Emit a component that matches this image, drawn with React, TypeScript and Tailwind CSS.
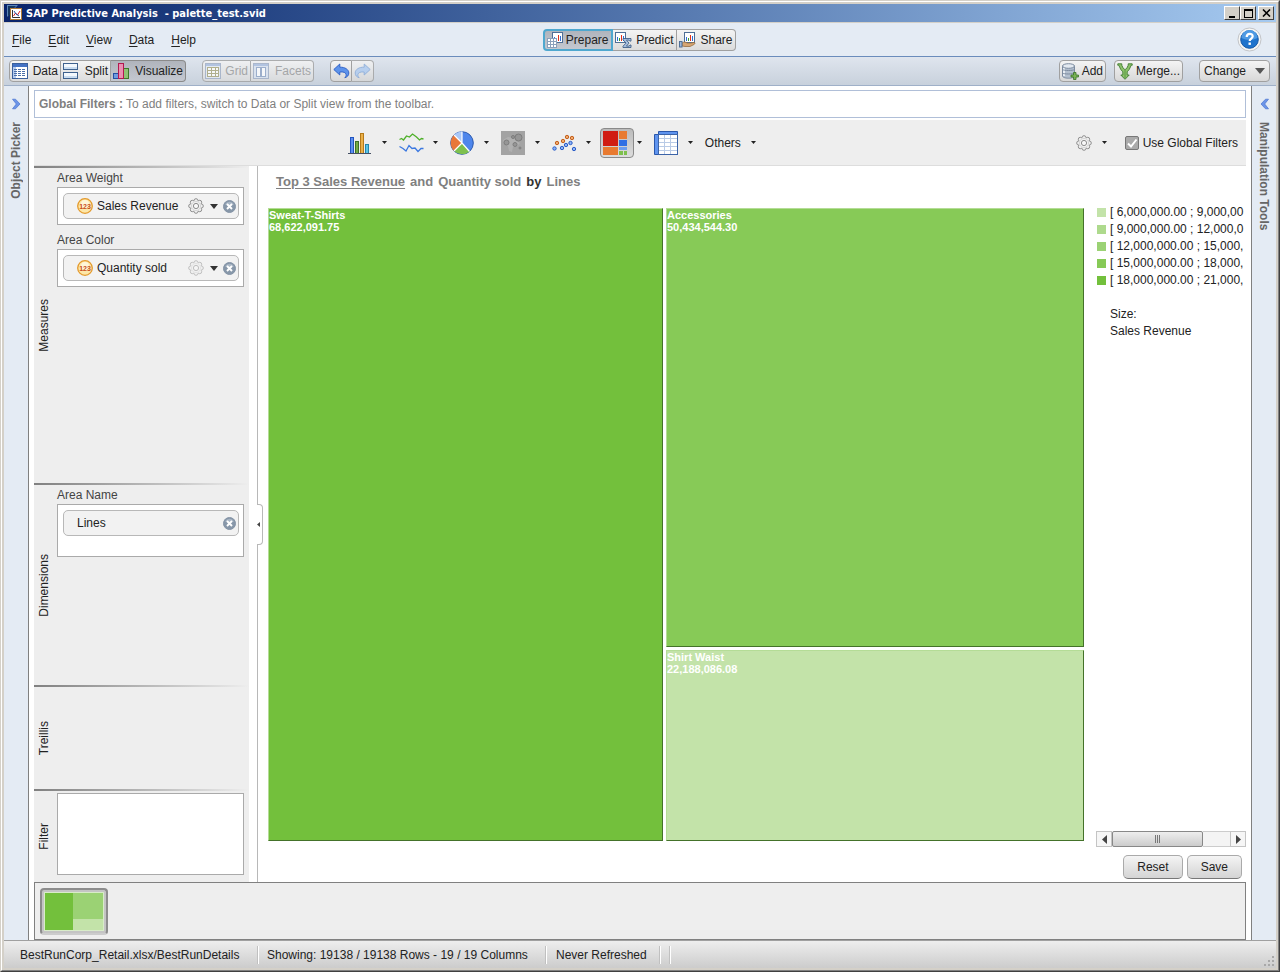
import React from 'react';

// ================================
// Data
// ================================

const MENUS = ['File', 'Edit', 'View', 'Data', 'Help'];

const LEGEND = [
  { color: 'bg-[#c3e3a9]', label: '[ 6,000,000.00 ; 9,000,00' },
  { color: 'bg-[#aeda8d]', label: '[ 9,000,000.00 ; 12,000,0' },
  { color: 'bg-[#9bd274]', label: '[ 12,000,000.00 ; 15,000,' },
  { color: 'bg-[#87ca57]', label: '[ 15,000,000.00 ; 18,000,' },
  { color: 'bg-[#73c03c]', label: '[ 18,000,000.00 ; 21,000,' },
];

// ================================
// Icons
// ================================

const AppIcon = () => (
  <svg width="16" height="16" viewBox="0 0 16 16">
    <path d="M0 0h11L8 3H4v5l-4 4z" fill="#5b86b8" />
    <path d="M1 1h8L3 8v2l-2 1z" fill="#16365f" />
    <rect x="3.5" y="3.5" width="11" height="11" fill="#fff" stroke="#b07a35" />
    <path d="M5.5 5v7.5H13" fill="none" stroke="#333" />
    <path d="M6.5 11l2-3 2 2 2.5-4" fill="none" stroke="#d22" />
    <path d="M7 6l2 3 3 2" fill="none" stroke="#25a" />
  </svg>
);

const MiniChart = ({ x, y }: { x: number; y: number }) => (
  <g transform={`translate(${x} ${y})`}>
    <rect x="0.5" y="0.5" width="10" height="10" fill="#fff" stroke="#4f6f97" />
    <path d="M2.5 5v4" stroke="#2f6fd8" />
    <path d="M4.5 6v3" stroke="#3f9a2a" />
    <path d="M6.5 3v6" stroke="#e0301a" />
    <path d="M8.5 4v5" stroke="#2f6fd8" />
  </g>
);

const PrepareIcon = () => (
  <svg width="17" height="16" viewBox="0 0 17 16">
    <MiniChart x={5} y={0} />
    <rect x="0.5" y="6.5" width="9" height="9" fill="#fff" stroke="#8aa0bb" />
    <path d="M0 9.5h10M0 12.5h10M3.5 6v10M6.5 6v10" stroke="#8aa0bb" />
  </svg>
);

const PredictIcon = () => (
  <svg width="17" height="16" viewBox="0 0 17 16">
    <MiniChart x={0} y={0} />
    <path
      d="M8 6.5h8v2.6h-1.2l-.8-1h-2.500l2.500 3-2.600 3H14.200l.8-1.100H16v2.500H8v-1.300l3-3.100-3-3.300z"
      fill="#a9c0e0"
      stroke="#33547f"
      strokeWidth="0.8"
    />
  </svg>
);

const ShareIcon = () => (
  <svg width="17" height="16" viewBox="0 0 17 16">
    <MiniChart x={5} y={0} />
    <path d="M3 11c2-1.5 4-1 5 0h4l3-.5c1.5 0 1 1.5 0 2l-4 2H6L3 14z" fill="#d7a673" stroke="#8d6234" strokeWidth="0.7" />
    <rect x="0.5" y="9.5" width="2.5" height="5.5" fill="#9db8da" stroke="#4f6f97" />
  </svg>
);

const DataIcon = () => (
  <svg width="17" height="16" viewBox="0 0 17 16">
    <rect x="0.5" y="0.5" width="15" height="15" fill="#fff" stroke="#3a5f9c" />
    <rect x="1" y="1" width="14" height="3" fill="#4472c4" />
    <rect x="1" y="4" width="3" height="11" fill="#b5cbee" />
    <path d="M2 6.5h12M2 8.5h12M2 10.5h12M2 12.5h12" stroke="#4b6ea8" strokeDasharray="3 1" />
  </svg>
);

const SplitIcon = () => (
  <svg width="16" height="16" viewBox="0 0 16 16">
    <rect x="0.5" y="0.5" width="14" height="6" fill="#f3f8fd" stroke="#3f628f" />
    <rect x="0.5" y="9.5" width="14" height="6" fill="#f3f8fd" stroke="#3f628f" />
    <path d="M1 5h13M1 14h13" stroke="#c9dcf0" strokeWidth="2" />
  </svg>
);

const VisualizeIcon = () => (
  <svg width="16" height="16" viewBox="0 0 16 16">
    <rect x="0.5" y="10.5" width="5" height="5" fill="#6f9be0" stroke="#2450a4" />
    <rect x="10.5" y="5.5" width="5" height="10" fill="#8fc274" stroke="#3c7a2a" />
    <rect x="5.5" y="0.5" width="5" height="15" fill="#ea8fb2" stroke="#b3184f" />
  </svg>
);

const GridIcon = () => (
  <svg width="16" height="16" viewBox="0 0 16 16">
    <rect x="0.5" y="0.5" width="15" height="15" fill="#e6ecf5" stroke="#a0aec5" />
    <rect x="1" y="1" width="14" height="2" fill="#a9bee0" />
    <rect x="2.5" y="4.5" width="11" height="9" fill="#fff" stroke="#a8a578" />
    <path d="M2 7.5h12M2 10.5h12M6.5 4v10M10.500 4v10" stroke="#a8a578" />
  </svg>
);

const FacetsIcon = () => (
  <svg width="16" height="16" viewBox="0 0 16 16">
    <rect x="0.5" y="0.5" width="15" height="15" fill="#dbe4f1" stroke="#a0aec5" />
    <rect x="1" y="1" width="14" height="2" fill="#a9bee0" />
    <rect x="3.5" y="4.5" width="4" height="9" fill="#fff" stroke="#8fa4c6" />
    <rect x="8.5" y="4.5" width="4" height="9" fill="#fff" stroke="#8fa4c6" />
  </svg>
);

const ArrowIcon = ({ flip = false }: { flip?: boolean }) => (
  <svg width="17" height="16" viewBox="0 0 17 16" className={flip ? '-scale-x-100' : ''}>
    <path
      d="M.8 6.500L6.800 1v3.200C12 4 15.800 6.500 15.800 10c0 2.500-1.500 4-4 4.800 1-1 1.500-2 1.300-3.200C12.800 9.500 10.500 8.600 6.800 9v3z"
      fill={flip ? '#b0ccf0' : '#5e93ea'}
      stroke={flip ? '#7fa4d6' : '#2a5cc4'}
      strokeWidth="0.9"
    />
  </svg>
);

const AddIcon = () => (
  <svg width="17" height="17" viewBox="0 0 17 17">
    <path d="M.5 3v10c0 1.200 2.600 2.200 6 2.200s6-1 6-2.200V3z" fill="#b3bfce" stroke="#7c8b9f" />
    <path d="M2 4v9" stroke="#e8edf3" strokeWidth="2" />
    <path d="M.5 6.500c1 1.300 11 1.300 12 0M.5 10c1 1.300 11 1.300 12 0" fill="none" stroke="#7c8b9f" />
    <ellipse cx="6.5" cy="3" rx="6" ry="2.3" fill="#e3e9f0" stroke="#7c8b9f" />
    <path d="M11.500 9.500h2.500v2.500h2.500v2h-2.500v2.500h-2.500V14H9v-2h2.500z" fill="#79b254" stroke="#3a7428" strokeWidth="0.8" />
  </svg>
);

const MergeIcon = () => (
  <svg width="16" height="17" viewBox="0 0 16 17">
    <path
      d="M.8.8h4v1.500l1.200 2.500 2 2 2-2 1.200-2.500V.8h4v1.500h-1l-2 4.200-2 2.300V12h2l-4.200 4.300L3.800 12h2V8.800l-2-2.300-2-4.200h-1z"
      fill="#8cc26a"
      stroke="#3f7d32"
      strokeWidth="0.9"
    />
    <path d="M8 7v8" stroke="#4f8f3e" strokeWidth="0.8" />
  </svg>
);

const HelpIcon = () => (
  <svg width="25" height="25" viewBox="0 0 25 25">
    <circle cx="12.5" cy="12.5" r="11.5" fill="#f6f6f4" stroke="#c2c4c8" />
    <circle cx="12.5" cy="12.5" r="8.8" fill="#1e73cc" stroke="#1558a6" />
    <path d="M4.5 11a8 8 0 0 1 16 0c-5 2.500-11 2.500-16 0z" fill="#4e9ae3" />
    <path d="M9.7 10c0-4 6-4 6-.7 0 2.200-3 2.300-3 4.700" fill="none" stroke="#fff" strokeWidth="2.2" />
    <rect x="11.5" y="15.5" width="2.4" height="2.4" fill="#fff" />
  </svg>
);

const GEAR_TEETH = [
  [8, 2.7], [11.7, 4.3], [13.3, 8], [11.7, 11.7], [8, 13.3], [4.3, 11.7], [2.7, 8], [4.3, 4.3],
];

const GearIcon = ({ faded = false }: { faded?: boolean }) => (
  <svg width="16" height="16" viewBox="0 0 16 16" className={faded ? 'opacity-50' : ''}>
    {GEAR_TEETH.map(([cx, cy]) => (
      <circle key={`${cx}-${cy}`} cx={cx} cy={cy} r="2" fill="#f0f0f0" stroke="#8d8d8d" />
    ))}
    <circle cx="8" cy="8" r="5.4" fill="#f0f0f0" />
    <circle cx="8" cy="8" r="4.6" fill="none" stroke="#cfcfcf" strokeWidth="0.8" />
    <circle cx="8" cy="8" r="2.6" fill="#f8f8f8" stroke="#8d8d8d" />
  </svg>
);

const MeasureIcon = () => (
  <svg width="16" height="16" viewBox="0 0 16 16">
    <circle cx="8" cy="8" r="7.3" fill="#fde7a8" stroke="#e39a2d" strokeWidth="1.3" />
    <circle cx="8" cy="6" r="4" fill="#fff6d8" />
    <text x="8" y="10.500" textAnchor="middle" fontSize="7" fontWeight="bold" fill="#c8501e" fontFamily="Liberation Sans, sans-serif">
      123
    </text>
  </svg>
);

const CloseIcon = () => (
  <svg width="13" height="13" viewBox="0 0 13 13">
    <circle cx="6.5" cy="6.5" r="6" fill="#8797a9" stroke="#8493a6" />
    <path d="M2 4.500a5 5 0 0 1 9 0c-2 1-7 1-9 0z" fill="#a9b6c5" />
    <path d="M4 4l5 5M9 4L4 9" stroke="#fff" strokeWidth="1.9" />
  </svg>
);

const Caret = () => (
  <svg width="5" height="3" viewBox="0 0 5 3">
    <path d="M0 0h5L2.5 3z" fill="#222" />
  </svg>
);

const WideCaret = () => (
  <svg width="8" height="5" viewBox="0 0 8 5">
    <path d="M0 0h8L4 5z" fill="#333" />
  </svg>
);

const Chevron = ({ left = false }: { left?: boolean }) => (
  <svg width="9" height="12" viewBox="0 0 9 12" className={left ? '-scale-x-100' : ''}>
    <path d="M.5 1.200h3L8 6l-4.500 4.800h-3L4.300 6z" fill="#6c95e8" stroke="#4a74d0" strokeWidth="0.7" />
  </svg>
);

const ColumnChartIcon = () => (
  <svg width="24" height="24" viewBox="0 0 24 24">
    <rect x="2.5" y="6.5" width="3" height="16" fill="#5b8ff0" stroke="#2255c0" />
    <rect x="7.5" y="10.5" width="3" height="12" fill="#74aa45" stroke="#3f6f28" />
    <rect x="12.5" y="2.5" width="3" height="20" fill="#eab04a" stroke="#b57a18" />
    <rect x="17.5" y="13.5" width="3" height="9" fill="#5cc4e6" stroke="#2387ad" />
    <path d="M0 22.5h23" stroke="#444f63" />
  </svg>
);

const LineChartIcon = () => (
  <svg width="25" height="24" viewBox="0 0 25 24">
    <path d="M.5 8.500l2-1 2 1.500 3-4 3 1L13.500 3l4 3 3 3 2-1.500 2 .5" fill="none" stroke="#4fb02a" strokeWidth="1.3" />
    <path d="M.5 15.500l3.500 2 3 2.500 3-5.500 3 3 3-.5 3 3.500 3-3h2.500" fill="none" stroke="#3b78e0" strokeWidth="1.3" />
  </svg>
);

const PieIcon = () => (
  <svg width="24" height="24" viewBox="0 0 24 24">
    <circle cx="12" cy="12" r="11.3" fill="#4e86ec" stroke="#2f5cae" />
    <path d="M12 12L4 4a11.300 11.300 0 0 0 0 16z" fill="#e8773a" />
    <path d="M12 12l-8 8a11.300 11.300 0 0 0 15.500.5z" fill="#7ec04d" />
    <path d="M12 12V.5A11.500 11.500 0 0 0 4 4z" fill="#a9c7f8" />
    <path d="M12 .5V12L4 4M12 12l-8 8M12 12l7.500 8.500" fill="none" stroke="#fff" strokeWidth="1.2" />
  </svg>
);

const GeoIcon = () => (
  <svg width="24" height="24" viewBox="0 0 24 24">
    <rect width="24" height="24" fill="#a3a3a3" />
    <path d="M2 9l5-3 6 1 2 3 4 2-3 3-4 1-1 5-3-1-1-5-4-2z" fill="#b0b0b0" />
    <g fill="#969696" stroke="#7d7d7d">
      <circle cx="17.5" cy="6.5" r="3.5" />
      <circle cx="5.5" cy="11.5" r="2.5" />
      <circle cx="14" cy="13.5" r="2" />
      <circle cx="12" cy="6" r="1.5" />
      <circle cx="19" cy="17" r="1" />
    </g>
  </svg>
);

const ScatterIcon = () => (
  <svg width="25" height="24" viewBox="0 0 25 24">
    <g fill="#f0a96c" stroke="#c4601c">
      <circle cx="5" cy="12" r="1.7" />
      <circle cx="11" cy="10" r="1.7" />
      <circle cx="15" cy="6" r="1.7" />
      <circle cx="20" cy="7" r="1.7" />
    </g>
    <g fill="#8db3f5" stroke="#2a5cc8">
      <circle cx="2.5" cy="17.500" r="1.7" />
      <circle cx="10" cy="17" r="1.7" />
      <circle cx="14" cy="14" r="1.7" />
      <circle cx="18.5" cy="12" r="1.7" />
      <circle cx="22" cy="18" r="1.7" />
    </g>
  </svg>
);

const TreemapIcon = () => (
  <svg width="24" height="24" viewBox="0 0 24 24">
    <rect width="15" height="15" fill="#d01c12" />
    <rect x="16" width="8" height="8" fill="#e87a30" />
    <rect x="16" y="9" width="8" height="6" fill="#2f6fe4" />
    <rect y="16" width="15" height="8" fill="#e87a30" />
    <rect x="16" y="16" width="8" height="3" fill="#6b9df0" />
    <rect x="16" y="20" width="4" height="4" fill="#7ec04d" />
    <rect x="21" y="20" width="3" height="4" fill="#7ec04d" />
  </svg>
);

const TableIcon = () => (
  <svg width="24" height="24" viewBox="0 0 24 24">
    <path d="M4.5.5h19v3h-19z" fill="#5f94ef" stroke="#2a57ac" />
    <path d="M.5 3.500h4v20h-4z" fill="#5f94ef" stroke="#2a57ac" />
    <rect x="4.5" y="3.5" width="19" height="20" fill="#fff" stroke="#3c64a8" />
    <path d="M5 7.500h18M5 11.500h18M5 15.500h18M5 19.500h18M10.500 4v19M16.500 4v19" stroke="#b9cbe6" />
  </svg>
);

// ================================
// Window chrome
// ================================

const captionClasses =
  'flex h-[14px] w-4 items-center justify-center border border-t-white border-r-[#404040] border-b-[#404040] border-l-white bg-[#d4d0c8]';

const TitleBar = () => (
  <header className="flex h-[18px] items-center bg-gradient-to-r from-[#0a246a] to-[#a6caf0] pr-[2px] pl-[3px]">
    <AppIcon />
    <h1 className="ml-[3px] flex-1 font-['DejaVu_Sans_Condensed','DejaVu_Sans',sans-serif] text-[11px] leading-none font-bold whitespace-pre text-white">
      {'SAP Predictive Analysis  - palette_test.svid'}
    </h1>
    <button aria-label="Minimize" className={captionClasses}>
      <svg width="9" height="9" viewBox="0 0 9 9"><path d="M1 7h6v2H1z" /></svg>
    </button>
    <button aria-label="Maximize" className={captionClasses}>
      <svg width="9" height="9" viewBox="0 0 9 9"><path d="M0 0h9v9H0zM1 2v6h7V2z" fillRule="evenodd" /></svg>
    </button>
    <button aria-label="Close" className={`ml-[2px] ${captionClasses}`}>
      <svg width="9" height="8" viewBox="0 0 9 8"><path d="M1 .5l7 7M8 .5l-7 7" stroke="#000" strokeWidth="1.6" /></svg>
    </button>
  </header>
);

interface SegmentProps {
  icon: React.ReactNode;
  label: string;
  className: string;
  active?: boolean;
  disabled?: boolean;
}

const Segment: React.FC<SegmentProps> = ({ icon, label, className, active, disabled }) => (
  <button
    aria-pressed={active}
    disabled={disabled}
    className={`flex h-[22px] items-center justify-between px-[2px] whitespace-nowrap ${className} ${
      active ? 'bg-gradient-to-b from-[#b0b4bc] to-[#c4c8d0]' : 'bg-gradient-to-b from-[#f4f4f4] to-[#dcdcdc]'
    } ${disabled ? 'text-[#999] opacity-80' : ''}`}
  >
    {icon}
    {label}
  </button>
);

const MenuBar = () => (
  <div className="grid h-[34px] grid-cols-[1fr_auto_1fr] items-center border-b border-[#6a8cbc] bg-[#e4ebf4] pr-[14px] pl-2">
    <nav className="flex gap-[17px]">
      {MENUS.map((menu) => (
        <button key={menu}>
          <span className="underline underline-offset-2">{menu[0]}</span>
          {menu.slice(1)}
        </button>
      ))}
    </nav>
    <div className="ml-1 flex">
      <Segment icon={<PrepareIcon />} label="Prepare" active className="w-[70px] rounded-l-[4px] border-2 border-[#4fa8cf]" />
      <Segment icon={<PredictIcon />} label="Predict" className="w-16 border border-l-0 border-[#a0a0a0]" />
      <Segment icon={<ShareIcon />} label="Share" className="w-[59px] rounded-r-[4px] border border-l-0 border-[#a0a0a0]" />
    </div>
    <button aria-label="Help" className="justify-self-end">
      <HelpIcon />
    </button>
  </div>
);

const pushClasses =
  'flex h-[22px] items-center justify-between rounded-[4px] border border-[#a0a0a0] bg-gradient-to-b from-[#f4f4f4] to-[#d8d8d8] whitespace-nowrap';

const Toolbar = () => (
  <div className="flex h-[29px] items-center border-b border-[#9fb0c8] bg-gradient-to-b from-[#dfe5ee] to-[#c8d1dc] pr-[6px] pl-[5px]">
    <div className="flex">
      <Segment icon={<DataIcon />} label="Data" className="w-[52px] rounded-l-[4px] border border-[#a0a0a0]" />
      <Segment icon={<SplitIcon />} label="Split" className="w-[50px] border border-l-0 border-[#a0a0a0]" />
      <Segment icon={<VisualizeIcon />} label="Visualize" active className="w-[75px] rounded-r-[4px] border border-l-0 border-[#8a8a8a]" />
    </div>
    <div className="ml-4 flex">
      <Segment icon={<GridIcon />} label="Grid" disabled className="w-[49px] rounded-l-[4px] border border-[#a0a0a0]" />
      <Segment icon={<FacetsIcon />} label="Facets" disabled className="w-[63px] rounded-r-[4px] border border-l-0 border-[#a0a0a0]" />
    </div>
    <div className="ml-4 flex">
      <button aria-label="Undo" className={`w-[22px] justify-center rounded-r-none ${pushClasses}`}>
        <ArrowIcon />
      </button>
      <button aria-label="Redo" disabled className={`w-[22px] justify-center rounded-l-none border-l-0 opacity-80 ${pushClasses}`}>
        <ArrowIcon flip />
      </button>
    </div>
    <div className="ml-auto flex">
      <button className={`w-[47px] px-[2px] ${pushClasses}`}>
        <AddIcon />
        Add
      </button>
      <button className={`ml-2 w-[69px] px-[2px] ${pushClasses}`}>
        <MergeIcon />
        Merge...
      </button>
      <button className={`ml-4 w-[71px] px-1 ${pushClasses}`}>
        Change
        <svg width="10" height="6" viewBox="0 0 10 6"><path d="M0 0h10L5 6z" fill="#555" /></svg>
      </button>
    </div>
  </div>
);

// ================================
// Chart type bar
// ================================

const CHART_TYPES = [
  { name: 'Column chart', icon: <ColumnChartIcon /> },
  { name: 'Line chart', icon: <LineChartIcon /> },
  { name: 'Pie chart', icon: <PieIcon /> },
  { name: 'Geographic chart', icon: <GeoIcon /> },
  { name: 'Scatter chart', icon: <ScatterIcon /> },
  { name: 'Tree map', icon: <TreemapIcon />, selected: true },
  { name: 'Table', icon: <TableIcon /> },
];

const ChartTypeBar = () => (
  <div className="mt-[2px] flex h-[46px] items-center border-b border-[#ddd] bg-[#eee]">
    <div className="flex flex-1 justify-center gap-[9px] pr-[9px]">
      {CHART_TYPES.map(({ name, icon, selected }) => (
        <button key={name} aria-label={name} className="flex items-center gap-[3px]">
          <span
            className={`flex h-[30px] w-[34px] items-center rounded-[4px] border pl-[2px] ${
              selected ? 'border-[#8a8a8a] bg-gradient-to-b from-[#bbb] to-[#ddd]' : 'border-transparent'
            }`}
          >
            {icon}
          </span>
          <Caret />
        </button>
      ))}
      <button className="flex items-center gap-[10px] pl-[3px]">
        Others
        <Caret />
      </button>
    </div>
    <div className="flex items-center pr-2">
      <button aria-label="Chart settings" className="flex items-center gap-[10px]">
        <GearIcon />
        <Caret />
      </button>
      <label className="ml-[18px] flex items-center gap-1">
        <span className="relative flex">
          <input type="checkbox" defaultChecked className="peer size-[14px] appearance-none rounded-[2px] border border-[#777] bg-[#aaa]" />
          <svg width="14" height="14" viewBox="0 0 14 14" className="pointer-events-none absolute inset-0 hidden peer-checked:block">
            <path d="M3 7.500l3 3 5.500-7" fill="none" stroke="#fff" strokeWidth="2" />
          </svg>
        </span>
        Use Global Filters
      </label>
    </div>
  </div>
);

// ================================
// Feeding panel
// ================================

const PanelSection: React.FC<{ title: string; children?: React.ReactNode }> = ({ title, children }) => (
  <section className="flex flex-col">
    <div className="h-[2px] bg-gradient-to-r from-[#808080] to-[#eee]" />
    <div className="flex flex-1 gap-[3px] pr-[5px]">
      <h2 className="flex w-5 items-center justify-center">
        <span className="rotate-180 [writing-mode:vertical-rl]">{title}</span>
      </h2>
      <div className="flex flex-1 flex-col gap-[7px] pt-[2px]">{children}</div>
    </div>
  </section>
);

interface FieldProps {
  label: string;
  value: string;
  measure?: boolean;
  faded?: boolean;
  boxClasses: string;
}

const Field: React.FC<FieldProps> = ({ label, value, measure, faded, boxClasses }) => (
  <div>
    <h3 className="leading-[17px] text-[#444]">{label}</h3>
    <div className={`border border-[#aaa] bg-white p-[5px] pr-1 ${boxClasses}`}>
      <div className="flex h-[26px] items-center rounded-[5px] border border-[#b8b8b8] bg-[#f2f2f2] pr-[2px] pl-[13px]">
        {measure && (
          <span className="mr-1">
            <MeasureIcon />
          </span>
        )}
        <span className="flex-1 whitespace-nowrap">{value}</span>
        {measure && (
          <button aria-label={`${value} options`} className="mr-[5px] flex items-center gap-[6px]">
            <GearIcon faded={faded} />
            <WideCaret />
          </button>
        )}
        <button aria-label={`Remove ${value}`}>
          <CloseIcon />
        </button>
      </div>
    </div>
  </div>
);

const FeedingPanel = () => (
  <aside className="grid w-[215px] grid-rows-[317fr_202fr_104fr_93fr] bg-[#eee]">
    <PanelSection title="Measures">
      <Field label="Area Weight" value="Sales Revenue" measure boxClasses="h-[38px]" />
      <Field label="Area Color" value="Quantity sold" measure faded boxClasses="h-[38px]" />
    </PanelSection>
    <PanelSection title="Dimensions">
      <Field label="Area Name" value="Lines" boxClasses="h-[53px]" />
    </PanelSection>
    <PanelSection title="Treillis" />
    <PanelSection title="Filter">
      <div className="mb-[7px] flex-1 border border-[#aaa] bg-white" />
    </PanelSection>
  </aside>
);

// ================================
// Tree map and legend
// ================================

interface TileProps {
  name: string;
  value: string;
  className: string;
}

const Tile: React.FC<TileProps> = ({ name, value, className }) => (
  <div
    className={`border border-t-[#b4dc96] border-r-[#44722a] border-b-[#44722a] border-l-[#b4dc96] text-[11px] leading-3 font-bold text-white ${className}`}
  >
    <p>{name}</p>
    <p>{value}</p>
  </div>
);

const Treemap = () => (
  <div className="mt-1 mb-[6px] grid flex-1 grid-cols-[395fr_418fr] grid-rows-[439fr_191fr] gap-[3px]">
    <Tile name="Sweat-T-Shirts" value="68,622,091.75" className="row-span-2 bg-[#73c03c]" />
    <Tile name="Accessories" value="50,434,544.30" className="bg-[#87ca57]" />
    <Tile name="Shirt Waist" value="22,188,086.08" className="bg-[#c3e3a9]" />
  </div>
);

const Legend = () => (
  <div className="flex w-[150px] flex-col">
    <div className="leading-[17px] whitespace-nowrap">
      <ul>
        {LEGEND.map(({ color, label }) => (
          <li key={label} className="flex h-[17px] items-center gap-1 pl-px">
            <span className={`size-[9px] shrink-0 ${color}`} />
            {label}
          </li>
        ))}
      </ul>
      <p className="mt-[17px] pl-[14px]">Size:</p>
      <p className="pl-[14px]">Sales Revenue</p>
    </div>
    <div className="mt-auto flex h-4">
      <button aria-label="Scroll left" className="flex w-4 items-center justify-center border border-[#c4c4c4] bg-[#f6f6f6]">
        <svg width="5" height="9" viewBox="0 0 5 9"><path d="M5 0v9L0 4.500z" fill="#444" /></svg>
      </button>
      <div className="flex flex-1 bg-[#f4f4f4]">
        <div className="flex w-[91px] items-center justify-center gap-px rounded-[2px] border border-[#888] bg-gradient-to-b from-[#eee] to-[#ccc]">
          <i className="h-2 w-px bg-[#777]" />
          <i className="h-2 w-px bg-[#777]" />
          <i className="h-2 w-px bg-[#777]" />
        </div>
        <div className="flex-1 border-y border-[#ccc]" />
      </div>
      <button aria-label="Scroll right" className="flex w-4 items-center justify-center border border-[#c4c4c4] bg-[#f6f6f6]">
        <svg width="5" height="9" viewBox="0 0 5 9"><path d="M0 0v9l5-4.500z" fill="#444" /></svg>
      </button>
    </div>
  </div>
);

const actionClasses = 'h-6 rounded-[5px] border border-[#aaa] border-b-[#777] bg-gradient-to-b from-[#f4f4f4] to-[#d4d4d4] px-[13px]';

const ChartArea = () => (
  <section className="relative ml-2 flex flex-1 flex-col border-l border-[#b8b8b8]">
    {/* Collapse handle sits on the divider */}
    <button
      aria-label="Collapse panel"
      className="absolute top-[338px] -left-px flex h-[41px] w-[6px] items-center rounded-r-[4px] border border-l-0 border-[#b8b8b8] bg-white"
    >
      <svg width="3" height="5" viewBox="0 0 3 5"><path d="M3 0v5L0 2.500z" fill="#444" /></svg>
    </button>
    <h2 className="flex h-[38px] gap-[5px] pt-2 pl-[18px] text-[13px] leading-4 font-bold text-[#808080]">
      <a href="#ranking" className="underline underline-offset-2">Top 3 Sales Revenue</a>
      <span>and</span>
      <span>Quantity sold</span>
      <span className="text-[#333]">by</span>
      <span>Lines</span>
    </h2>
    <div className="flex flex-1 gap-3 pl-[10px]">
      <Treemap />
      <Legend />
    </div>
    <div className="flex justify-end gap-1 pt-2 pr-1 pb-[3px]">
      <button className={actionClasses}>Reset</button>
      <button className={actionClasses}>Save</button>
    </div>
  </section>
);

// ================================
// Thumbnails and status bar
// ================================

const Filmstrip = () => (
  <div className="h-[58px] border border-[#808080] bg-[#eee] p-[5px]">
    <button aria-label="Chart 1" className="h-[47px] w-[68px] rounded-[4px] border-2 border-[#8c8c8c] border-b-[#ccc] bg-[#c4c4c4] p-[2px]">
      <span className="grid h-full grid-cols-[28fr_31fr] grid-rows-[27fr_12fr] border border-[#d8ecc8]">
        <span className="row-span-2 bg-[#73c03c]" />
        <span className="bg-[#9bd274]" />
        <span className="bg-[#c3e3a9]" />
      </span>
    </button>
  </div>
);

const Divider = () => <i className="h-[18px] w-[2px] border-l border-[#c0c0c0] bg-white" />;

const StatusBar = () => (
  <footer className="flex h-7 items-center border-t border-[#a0a0a0] bg-gradient-to-b from-[#eee] to-[#ccc] pl-4">
    <span className="w-[237px]">BestRunCorp_Retail.xlsx/BestRunDetails</span>
    <Divider />
    <span className="w-[286px] pl-2">Showing: 19138 / 19138 Rows - 19 / 19 Columns</span>
    <Divider />
    <span className="w-[112px] pl-[9px]">Never Refreshed</span>
    <Divider />
    <span className="w-2" />
    <Divider />
    <svg width="12" height="12" viewBox="0 0 12 12" className="mr-px mb-px ml-auto self-end">
      <path d="M9 1h2v2H9zM5 5h2v2H5zM9 5h2v2H9zM1 9h2v2H1zM5 9h2v2H5zM9 9h2v2H9z" fill="#a8a8a8" />
    </svg>
  </footer>
);

// ================================
// App
// ================================

export default function App() {
  return (
    <div className="flex min-h-screen border border-t-[#d4d0c8] border-r-[#404040] border-b-[#404040] border-l-[#d4d0c8] font-['Liberation_Sans',Arial,sans-serif] text-xs text-[#222]">
      <div className="flex min-w-0 flex-1 flex-col border border-t-white border-r-[#808080] border-b-[#808080] border-l-white bg-[#d4d0c8] p-[2px]">
        <TitleBar />
        <div className="mt-px flex flex-1 flex-col">
          <MenuBar />
          <Toolbar />
          <div className="flex flex-1 bg-white">
            <aside className="flex w-[25px] flex-col items-center gap-3 border-r border-[#808080] bg-[#e4ebf4] pt-3">
              <button aria-label="Open object picker">
                <Chevron />
              </button>
              <span className="rotate-180 font-bold text-[#666] [writing-mode:vertical-rl]">Object Picker</span>
            </aside>
            <main className="flex min-w-0 flex-1 flex-col px-[5px] pt-1">
              <div className="flex h-7 items-center gap-[3px] border border-[#b0bfd8] px-1 text-[#808080]">
                <b>Global Filters :</b>
                <span>To add filters, switch to Data or Split view from the toolbar.</span>
              </div>
              <ChartTypeBar />
              <div className="flex flex-1">
                <FeedingPanel />
                <ChartArea />
              </div>
              <Filmstrip />
            </main>
            <aside className="flex w-[25px] flex-col items-center gap-3 border-l border-[#808080] bg-[#e4ebf4] pt-3">
              <button aria-label="Open manipulation tools">
                <Chevron left />
              </button>
              <span className="font-bold text-[#666] [writing-mode:vertical-rl]">Manipulation Tools</span>
            </aside>
          </div>
          <StatusBar />
        </div>
      </div>
    </div>
  );
}
